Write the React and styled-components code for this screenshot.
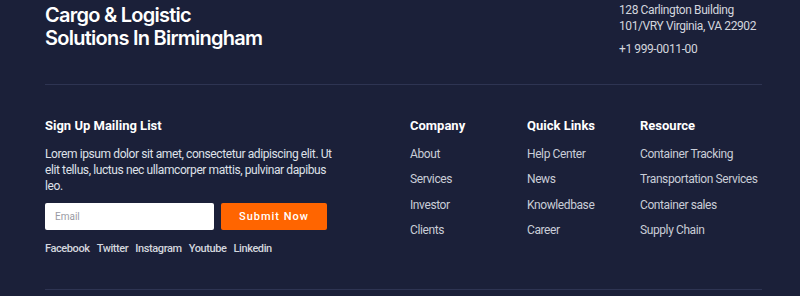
import React from "react";
import styled, { createGlobalStyle } from "styled-components";

const GlobalStyle = createGlobalStyle`
  html, body { margin: 0; padding: 0; background: #1b2039; }
  * { box-sizing: border-box; }
`;

const Footer = styled.footer`
  background: #1b2039;
  height: 296px;
  overflow: hidden;
  font-family: Roboto, "Liberation Sans", sans-serif;
`;

const Container = styled.div`
  margin: 0 38px 0 45px;
`;

const TopRow = styled.div`
  display: flex;
  justify-content: space-between;
  align-items: flex-start;
  padding-bottom: 27.5px;
  border-bottom: 1px solid #2e3452;
`;

const Headline = styled.h2`
  margin: 4px 0 0;
  font-family: Inter, sans-serif;
  font-weight: 600;
  font-size: 20px;
  line-height: 23px;
  letter-spacing: -0.75px;
  color: #ffffff;
`;

const Address = styled.div`
  width: 143px;
  margin-top: 1.5px;
  font-size: 12px;
  line-height: 16px;
  letter-spacing: -0.4px;
  color: #d3d6de;
`;

const AddrLine = styled.p`
  margin: 0 0 ${(p) => p.$gap || 0}px;
  white-space: nowrap;
`;

const Main = styled.div`
  display: grid;
  grid-template-columns: 365px 117px 113px 1fr;
  padding: 33px 0 33px;
  border-bottom: 1px solid #2e3452;
`;

const Title = styled.h4`
  margin: 0;
  font-size: 13px;
  line-height: 16px;
  font-weight: 700;
  color: #ffffff;
`;

const Para = styled.p`
  margin: 12px 0 0;
  width: 292px;
  font-size: 12px;
  line-height: 16px;
  letter-spacing: -0.4px;
  color: #dfe1e8;
`;

const Form = styled.form`
  display: flex;
  gap: 7px;
  margin-top: 9px;
`;

const Input = styled.input`
  width: 169px;
  height: 27px;
  border: none;
  border-radius: 2px;
  background: #ffffff;
  padding: 0 10px;
  font-family: Roboto, sans-serif;
  font-size: 10px;
  outline: none;
  &::placeholder { color: #9a9aa3; }
`;

const Button = styled.button`
  width: 106px;
  height: 27px;
  border: none;
  border-radius: 2px;
  background: #ff6500;
  color: #ffffff;
  font-family: Roboto, sans-serif;
  font-weight: 500;
  font-size: 11px;
  letter-spacing: 1px;
  cursor: pointer;
`;

const Socials = styled.div`
  display: flex;
  gap: 7px;
  margin-top: 11.5px;
`;

const Social = styled.a`
  font-size: 11px;
  line-height: 14px;
  font-weight: 500;
  letter-spacing: -0.4px;
  color: #d3d6de;
  text-decoration: none;
`;

const LinkList = styled.ul`
  list-style: none;
  margin: 11.5px 0 0;
  padding: 0;
  display: flex;
  flex-direction: column;
  gap: 9.67px;
`;

const LinkItem = styled.li`
  font-size: 12px;
  line-height: 16px;
  letter-spacing: -0.4px;
  white-space: nowrap;
  color: #c9cdd7;
`;

const columns = [
  { title: "Company", links: ["About", "Services", "Investor", "Clients"] },
  { title: "Quick Links", links: ["Help Center", "News", "Knowledbase", "Career"] },
  {
    title: "Resource",
    links: ["Container Tracking", "Transportation Services", "Container sales", "Supply Chain"],
  },
];

export default function App() {
  return (
    <>
      <GlobalStyle />
      <Footer>
        <Container>
          <TopRow>
            <Headline>
              Cargo &amp; Logistic
              <br />
              Solutions In Birmingham
            </Headline>
            <Address>
              <AddrLine>128 Carlington Building</AddrLine>
              <AddrLine $gap={7}>101/VRY Virginia, VA 22902</AddrLine>
              <AddrLine>+1 999-0011-00</AddrLine>
            </Address>
          </TopRow>
          <Main>
            <div>
              <Title>Sign Up Mailing List</Title>
              <Para>
                Lorem ipsum dolor sit amet, consectetur adipiscing elit. Ut elit tellus, luctus nec
                ullamcorper mattis, pulvinar dapibus leo.
              </Para>
              <Form onSubmit={(e) => e.preventDefault()}>
                <Input type="email" placeholder="Email" />
                <Button type="submit">Submit Now</Button>
              </Form>
              <Socials>
                {["Facebook", "Twitter", "Instagram", "Youtube", "Linkedin"].map((s) => (
                  <Social key={s} href="#">
                    {s}
                  </Social>
                ))}
              </Socials>
            </div>
            {columns.map((c) => (
              <div key={c.title}>
                <Title>{c.title}</Title>
                <LinkList>
                  {c.links.map((l) => (
                    <LinkItem key={l}>{l}</LinkItem>
                  ))}
                </LinkList>
              </div>
            ))}
          </Main>
        </Container>
      </Footer>
    </>
  );
}
